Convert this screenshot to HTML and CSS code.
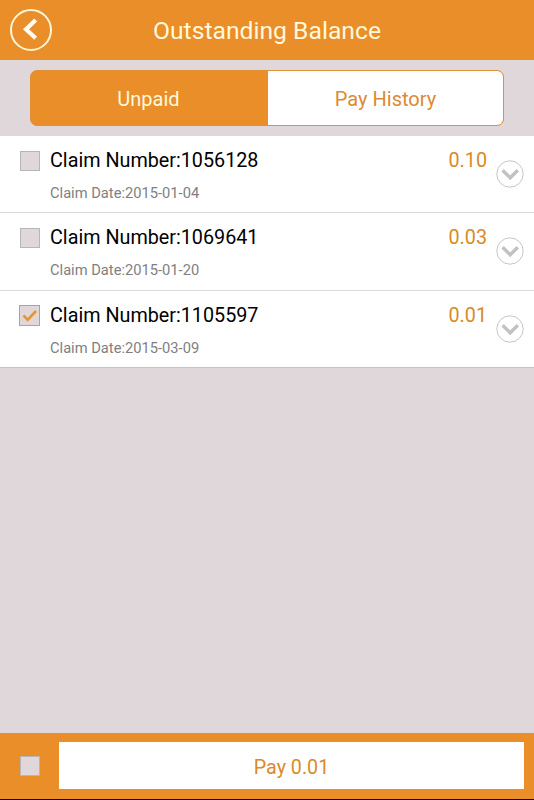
FILE: index.html
```html
<!DOCTYPE html>
<html lang="en">
<head>
    <meta charset="UTF-8">
    <meta name="viewport" content="width=device-width, initial-scale=1.0">
    <title>Outstanding Balance</title>
    <link rel="stylesheet" href="styles.css">
</head>
<body>
    <header>
        <button class="back" aria-label="Back">
            <svg width="42" height="42" viewBox="0 0 42 42">
                <circle cx="21" cy="21" r="20" fill="none" stroke="#fff6d8" stroke-width="2"/>
                <path d="M25.7 11 L16 20.3 L25.7 29.3" fill="none" stroke="#fffdf2" stroke-width="4.2"/>
            </svg>
        </button>
        <h1>Outstanding Balance</h1>
    </header>

    <nav class="tabs">
        <button class="tab active">Unpaid</button>
        <button class="tab">Pay History</button>
    </nav>

    <main>
        <section class="claim">
            <span class="checkbox"></span>
            <div class="info">
                <h2>Claim Number:1056128</h2>
                <p>Claim Date:2015-01-04</p>
            </div>
            <span class="amount">0.10</span>
            <svg class="expand" width="28" height="28" viewBox="0 0 28 28">
                <circle cx="14" cy="14" r="13.2"/>
                <path d="M6.6 10.2 L14.2 17.8 L21.8 10.2"/>
            </svg>
        </section>

        <section class="claim">
            <span class="checkbox"></span>
            <div class="info">
                <h2>Claim Number:1069641</h2>
                <p>Claim Date:2015-01-20</p>
            </div>
            <span class="amount">0.03</span>
            <svg class="expand" width="28" height="28" viewBox="0 0 28 28">
                <circle cx="14" cy="14" r="13.2"/>
                <path d="M6.6 10.2 L14.2 17.8 L21.8 10.2"/>
            </svg>
        </section>

        <section class="claim">
            <span class="checkbox checked">
                <svg width="19" height="19" viewBox="0 0 19 19">
                    <path d="M3.5 9.3 L7.7 13.8 L16 5"/>
                </svg>
            </span>
            <div class="info">
                <h2>Claim Number:1105597</h2>
                <p>Claim Date:2015-03-09</p>
            </div>
            <span class="amount">0.01</span>
            <svg class="expand" width="28" height="28" viewBox="0 0 28 28">
                <circle cx="14" cy="14" r="13.2"/>
                <path d="M6.6 10.2 L14.2 17.8 L21.8 10.2"/>
            </svg>
        </section>
    </main>

    <footer>
        <span class="checkbox"></span>
        <button class="pay">Pay 0.01</button>
    </footer>
</body>
</html>
```
FILE: styles.css
```css
* {
    box-sizing: border-box;
}

body {
    font-family: Roboto, 'Liberation Sans', sans-serif;
    margin: 0;
    height: 100vh;
    display: flex;
    flex-direction: column;
    background-color: #e0d7da;
    overflow: hidden;
}

h1, h2, p {
    margin: 0;
    font-weight: 400;
    white-space: nowrap;
}

button {
    font-family: inherit;
    border: none;
    padding: 0;
    cursor: pointer;
}

header {
    height: 60px;
    display: grid;
    grid-template-columns: 62px 1fr 62px;
    align-items: center;
    background-color: #e98e29;
}

header h1 {
    padding-top: 2px;
    color: #fff8dc;
    font-size: 24.7px;
    line-height: 30px;
    text-align: center;
}

.back {
    width: 42px;
    height: 42px;
    margin-left: 10px;
    background: none;
}

.back svg {
    display: block;
}

.tabs {
    display: flex;
    height: 56px;
    margin: 10px 30px;
    border: 1.5px solid #e28f35;
    border-radius: 7px;
    background-color: #e98e29;
    overflow: hidden;
}

.tab {
    flex: 1;
    padding-top: 2px;
    font-size: 20px;
    color: #dc8a33;
    background-color: #fff;
}

.tab.active {
    flex: 0 0 237px;
    padding-right: 2px;
    color: #fff8dc;
    background-color: #e98e29;
}

main {
    flex: 1;
}

.claim {
    display: flex;
    height: 77.3px;
    padding: 0 10px 0 20px;
    border-bottom: 1px solid #dcdadb;
    background-color: #fff;
}

.claim:last-child {
    border-color: #c9c3c5;
}

.checkbox {
    flex: none;
    width: 20px;
    height: 20px;
    border: 1px solid #bcb3b5;
    background-color: #e0d7da;
}

.claim .checkbox {
    margin-top: 15px;
}

.claim .checkbox.checked {
    width: 21px;
    height: 21px;
    margin-top: 14px;
    margin-left: -1px;
    border-color: #a9a3a8;
}

.checked path {
    fill: none;
    stroke: #e8942f;
    stroke-width: 2.6;
}

.checkbox svg {
    display: block;
}

.info {
    flex: 1;
    margin-left: 10px;
    padding-top: 12px;
}

.info h2 {
    font-size: 19.75px;
    line-height: 26px;
    color: #000;
}

.info p {
    margin-top: 10px;
    font-size: 14.7px;
    line-height: 19px;
    color: #808080;
}

.amount {
    margin-top: 12px;
    font-size: 19.75px;
    line-height: 26px;
    color: #d98a26;
}

.expand {
    flex: none;
    margin: 24px 0 0 9px;
    fill: none;
}

.expand circle {
    stroke: #c6c6c6;
    stroke-width: 1;
}

.expand path {
    stroke: #c2c2c2;
    stroke-width: 3.4;
}

footer {
    display: flex;
    align-items: center;
    height: 67px;
    padding: 0 10px 0 20px;
    background-color: #e98e29;
    border-bottom: 1px solid #000;
}

.pay {
    flex: 1;
    height: 47px;
    margin: 0 0 1px 19px;
    padding-top: 4px;
    font-size: 19.7px;
    color: #dc8a2b;
    background-color: #fff;
}
```
